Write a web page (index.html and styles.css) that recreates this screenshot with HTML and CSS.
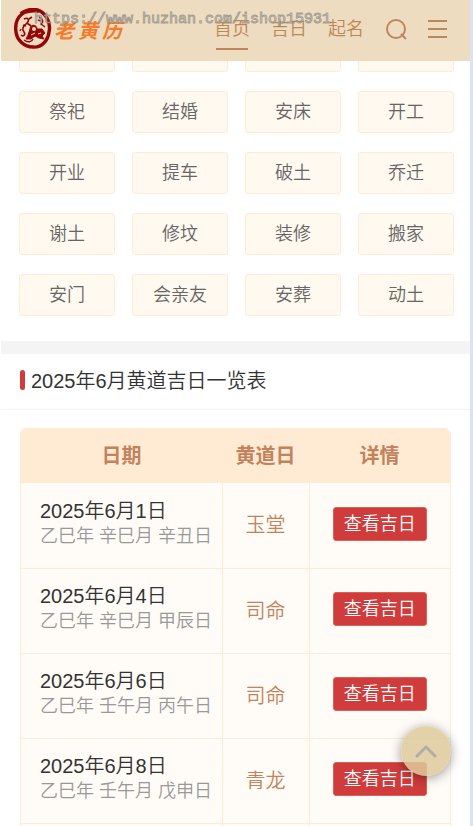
FILE: index.html
```html
<!DOCTYPE html>
<html lang="zh-CN">
<head>
    <meta charset="UTF-8">
    <meta name="viewport" content="width=device-width, initial-scale=1.0">
    <title>老黄历</title>
    <link rel="stylesheet" href="styles.css">
</head>
<body>
    <div class="page">
        <header class="header">
            <a class="logo" href="#">
                <svg width="38" height="42" viewBox="0 0 38 42" fill="none" stroke="#950609">
                    <path d="M8 6C12 1 21 0 26 3C33 7 37 16 35 24C34 33 27 40 19 39C10 39 3 32 2 24C1 17 3 10 8 6Z" stroke-width="3.4"/>
                    <path d="M7 6C10 3 19 2 25 3" stroke-width="4"/>
                    <path d="M10 11C14 9 16 12 13 15C10 18 7 20 10 24C12 27 9 29 7 27M13 15L17 18M12 18L9 17M15 11L18 9" stroke-width="1.6"/>
                    <path d="M25 9C29 11 30 14 27 16L31 19M24 12L27 13M10 32C14 35 18 34 19 31M7 21L6 23" stroke-width="1.4"/>
                    <path d="M16 21C16 16 23 16 23 21L28 21L31 25L28 28L30 31L25 30L21 28L17 31L12 31L14 27Z" fill="#950609" stroke-width="1"/>
                    <circle cx="20" cy="21" r="2" fill="#eedcc0" stroke="none"/>
                    <path d="M17 27L21 25M24 26L27 25" stroke="#eedcc0" stroke-width="1"/>
                </svg>
                <span class="logo-name"><span>老</span><span>黄</span><span>历</span></span>
            </a>
            <nav class="nav">
                <a class="active" href="#">首页</a>
                <a href="#">吉日</a>
                <a href="#">起名</a>
            </nav>
            <button class="icon-btn" type="button" aria-label="搜索">
                <svg width="22" height="22" viewBox="0 0 22 22" fill="none" stroke="#bd8759" stroke-width="2">
                    <circle cx="11" cy="11" r="9"/>
                    <path d="M16 16L21 21"/>
                </svg>
            </button>
            <button class="icon-btn menu-btn" type="button" aria-label="菜单">
                <svg width="19" height="18" viewBox="0 0 19 18" fill="none" stroke="#bd8759" stroke-width="2">
                    <path d="M0 1H19M0 9H19M0 17H19"/>
                </svg>
            </button>
            <span class="watermark">https://www.huzhan.com/ishop15931</span>
        </header>

        <section class="tags">
            <a href="#"></a>
            <a href="#"></a>
            <a href="#"></a>
            <a href="#"></a>
            <a href="#">祭祀</a>
            <a href="#">结婚</a>
            <a href="#">安床</a>
            <a href="#">开工</a>
            <a href="#">开业</a>
            <a href="#">提车</a>
            <a href="#">破土</a>
            <a href="#">乔迁</a>
            <a href="#">谢土</a>
            <a href="#">修坟</a>
            <a href="#">装修</a>
            <a href="#">搬家</a>
            <a href="#">安门</a>
            <a href="#">会亲友</a>
            <a href="#">安葬</a>
            <a href="#">动土</a>
        </section>

        <section class="days">
            <h2>2025年6月黄道吉日一览表</h2>
            <div class="table-wrap">
                <table>
                    <thead>
                        <tr><th class="col-date">日期</th><th class="col-god">黄道日</th><th>详情</th></tr>
                    </thead>
                    <tbody>
                        <tr>
                            <td class="date">2025年6月1日<small>乙巳年 辛巳月 辛丑日</small></td>
                            <td>玉堂</td>
                            <td><a class="view" href="#">查看吉日</a></td>
                        </tr>
                        <tr>
                            <td class="date">2025年6月4日<small>乙巳年 辛巳月 甲辰日</small></td>
                            <td>司命</td>
                            <td><a class="view" href="#">查看吉日</a></td>
                        </tr>
                        <tr>
                            <td class="date">2025年6月6日<small>乙巳年 壬午月 丙午日</small></td>
                            <td>司命</td>
                            <td><a class="view" href="#">查看吉日</a></td>
                        </tr>
                        <tr>
                            <td class="date">2025年6月8日<small>乙巳年 壬午月 戊申日</small></td>
                            <td>青龙</td>
                            <td><a class="view" href="#">查看吉日</a></td>
                        </tr>
                        <tr><td></td><td></td><td></td></tr>
                    </tbody>
                </table>
            </div>
        </section>

        <button class="to-top" type="button" aria-label="返回顶部">
            <svg width="24" height="14" viewBox="0 0 24 14" fill="none" stroke="#b1aca6" stroke-width="3" stroke-linecap="round" stroke-linejoin="round">
                <path d="M3 12L12 3L21 12"/>
            </svg>
        </button>
    </div>
</body>
</html>
```
FILE: styles.css
```css
* {
    box-sizing: border-box;
}
body {
    margin: 0;
    background: #fff;
    color: #333;
    font-family: "Liberation Sans", "Noto Sans CJK SC", sans-serif;
    font-size: 18px;
    font-weight: 350;
}
a {
    color: inherit;
    text-decoration: none;
}
button {
    padding: 0;
    border: 0;
    background: none;
    cursor: pointer;
}
svg {
    display: block;
}
.page {
    height: 100vh;
    overflow: hidden;
    border-left: 1px solid #fff;
    border-right: 3px solid #dbe3f0;
}

/* header */
.header {
    position: fixed;
    top: 0;
    left: 1px;
    right: 3px;
    z-index: 10;
    display: flex;
    align-items: center;
    height: 61px;
    padding: 0 23px 3px 13px;
    background: #eedcc0;
    color: #bd8759;
}
.logo {
    display: flex;
    align-items: center;
    gap: 2px;
}
.logo-name {
    display: flex;
    gap: 4px;
    color: #f57b2b;
    font-size: 20px;
    font-style: italic;
    font-weight: 700;
}
.nav {
    display: flex;
    gap: 21px;
    margin-left: auto;
}
.nav a {
    position: relative;
    line-height: 42px;
}
.nav .active::after {
    content: "";
    position: absolute;
    left: 2px;
    right: 2px;
    bottom: 0;
    height: 2px;
    background: #bd8759;
}
.icon-btn {
    margin-left: 21px;
}
.watermark {
    position: absolute;
    top: 10px;
    left: 33px;
    color: rgba(235, 230, 220, 0.7);
    font-family: "Liberation Mono", monospace;
    font-size: 15px;
    line-height: 20px;
    -webkit-text-stroke: 1px rgba(125, 122, 115, 0.65);
    pointer-events: none;
}

/* tags */
.tags {
    display: grid;
    grid-template-columns: repeat(4, 1fr);
    gap: 19px 17px;
    padding: 30px 16px 25px 18px;
    border-bottom: 13px solid #f4f4f4;
}
.tags a {
    height: 42px;
    border: 1px solid #ffead4;
    border-radius: 3px;
    background: #fff9ef;
    color: #666;
    line-height: 40px;
    text-align: center;
}

/* lucky days */
.days h2 {
    display: flex;
    align-items: center;
    gap: 6px;
    height: 56px;
    margin: 0;
    padding: 0 0 4px 19px;
    border-bottom: 1px solid #f4f4f4;
    font-size: 20px;
    font-weight: 350;
}
.days h2::before {
    content: "";
    width: 5px;
    height: 20px;
    border-radius: 3px;
    background: #d03c3c;
}
.table-wrap {
    margin: 18px 19px;
    overflow: hidden;
    border: 1px solid #ffead4;
    border-radius: 6px;
}
table {
    width: 100%;
    table-layout: fixed;
    border-collapse: collapse;
    background: #fffcf7;
    color: #c2835c;
    font-size: 20px;
    text-align: center;
}
th {
    height: 54px;
    padding: 0 0 3px;
    background: #ffead4;
    font-weight: 700;
}
.col-date {
    width: 201px;
}
.col-god {
    width: 87px;
}
td {
    height: 85px;
    padding: 0 0 3px;
    border-right: 1px solid #ffead4;
    border-bottom: 1px solid #ffead4;
}
td:last-child {
    border-right: 0;
}
.date {
    padding-left: 19px;
    color: #333;
    line-height: 25px;
    text-align: left;
    white-space: nowrap;
}
.date small {
    display: block;
    color: #999;
    font-size: 18px;
}
.view {
    display: inline-block;
    padding: 0 10px;
    border: 1px solid #dc6053;
    border-radius: 3px;
    background: #d03c3c;
    color: #fff;
    font-size: 18px;
    line-height: 32px;
    vertical-align: middle;
}

/* back to top */
.to-top {
    position: fixed;
    right: 22px;
    bottom: 50px;
    display: flex;
    align-items: center;
    justify-content: center;
    width: 50px;
    height: 50px;
    border-radius: 50%;
    background: rgba(222, 202, 155, 0.85);
    box-shadow: 0 2px 12px rgba(0, 0, 0, 0.4);
}
```
